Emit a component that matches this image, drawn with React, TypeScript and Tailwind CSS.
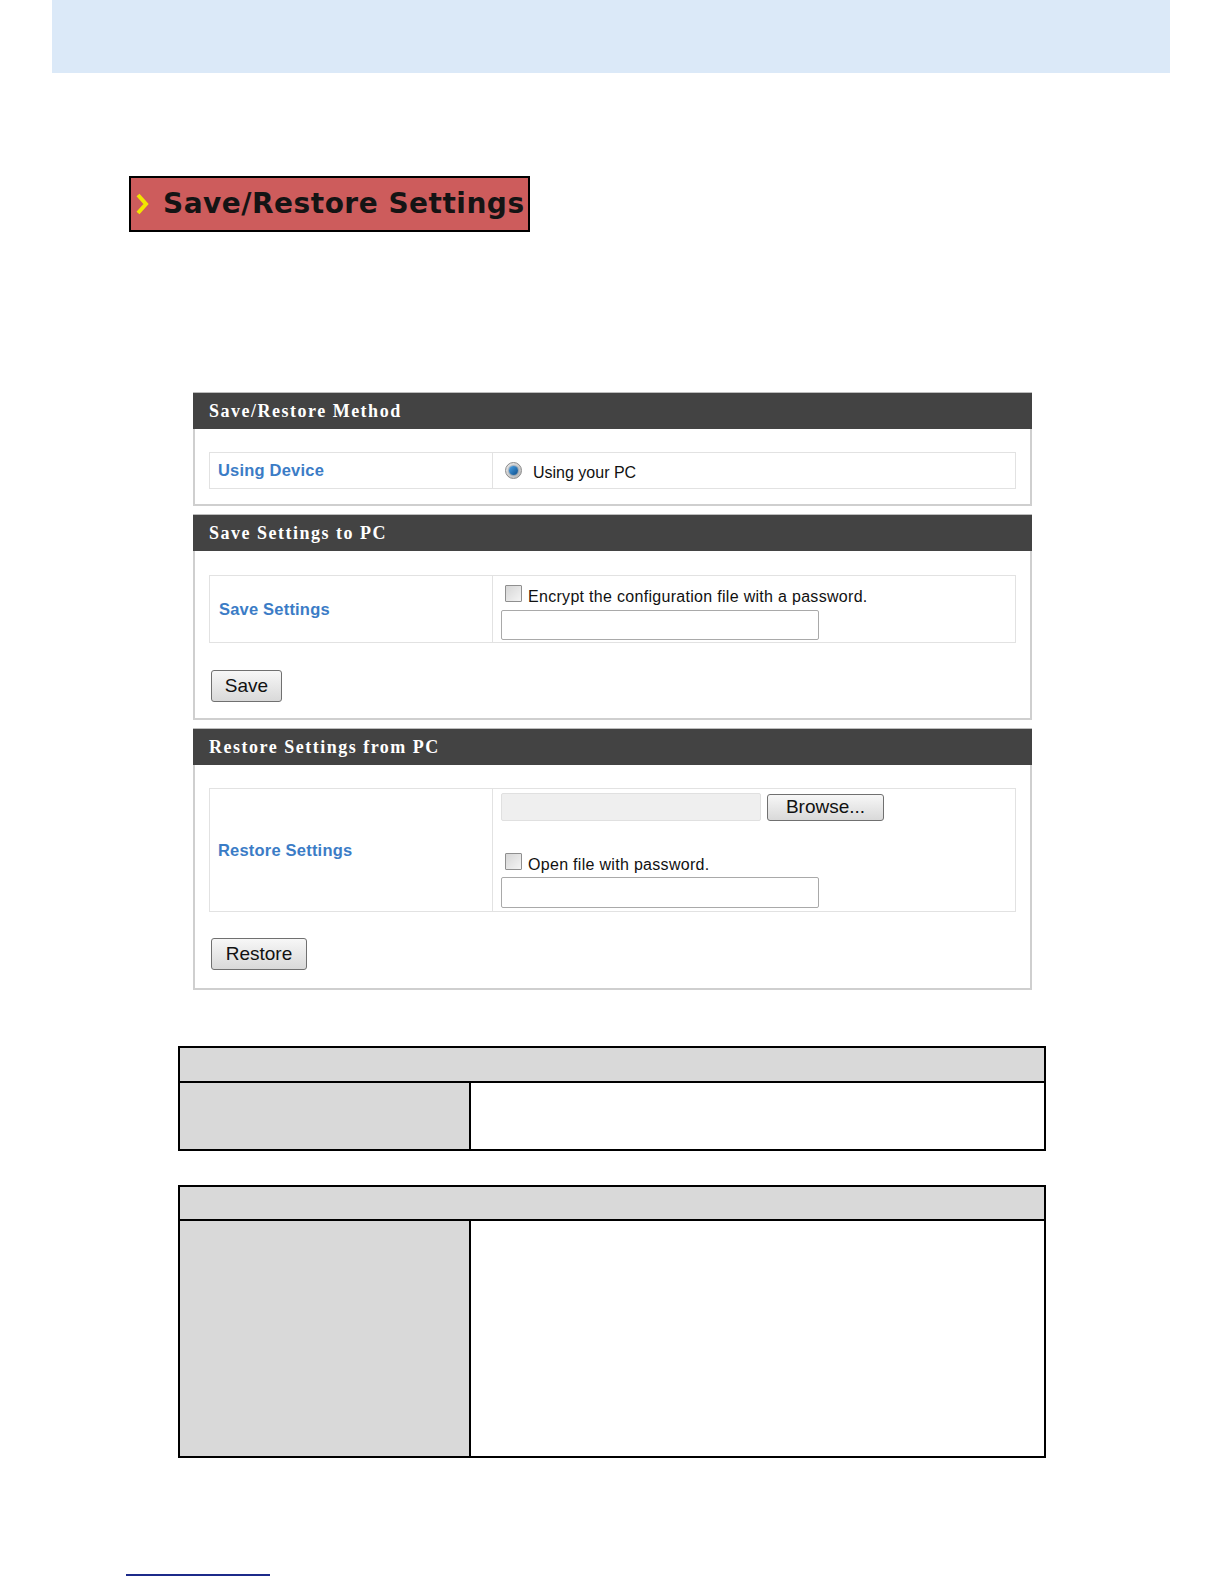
import React from "react";

const Header = ({ title }: { title: string }) => (
  <div className="h-[37px] bg-[#434343] border-t border-[#bdbdbd] flex items-center pl-[16px]">
    <span className="text-white font-bold text-[18px] tracking-[1.5px]" style={{ fontFamily: '"Liberation Serif", "DejaVu Serif", serif' }}>
      {title}
    </span>
  </div>
);

const Checkbox = () => (
  <span className="inline-block w-[17px] h-[17px] border border-[#8f8f8f] bg-gradient-to-br from-[#d6d6d6] to-[#f4f4f4] rounded-[1px] shrink-0" />
);

const Btn = ({ label, w }: { label: string; w: string }) => (
  <button
    className={`${w} h-[32px] ml-[2px] border border-[#707070] rounded-[3px] bg-gradient-to-b from-[#f7f7f7] to-[#d9d9d9] text-[19px] text-[#111] flex items-center justify-center`}
    style={{ fontFamily: '"Liberation Sans", Arial, sans-serif' }}
  >
    {label}
  </button>
);

const labelCls = "text-[#3b7cc6] font-bold text-[16.5px] tracking-[0.2px]";
const labelFont = { fontFamily: '"Liberation Sans", Arial, sans-serif' };
const bodyFont = { fontFamily: '"Liberation Sans", Arial, sans-serif' };

export default function App() {
  return (
    <div className="w-[1224px] h-[1584px] bg-white relative overflow-hidden">
      <div className="ml-[52px] w-[1118px] h-[73px] bg-[#dbe9f8]" />

      <div className="mt-[103px] ml-[129px] w-[401px] h-[56px] border-2 border-black bg-[#cd5c5c] flex items-center">
        <svg width="14" height="22" viewBox="0 0 14 22" className="ml-[4px] mr-[14px]">
          <path d="M3 2 L11 11 L3 20" fill="none" stroke="#f2e600" strokeWidth="4" strokeLinejoin="miter" />
        </svg>
        <span className="font-bold text-[28px] text-[#141414] tracking-[0.5px]" style={{ fontFamily: '"DejaVu Sans", Verdana, sans-serif' }}>
          Save/Restore Settings
        </span>
      </div>

      <div className="mt-[160px] ml-[193px] w-[839px] flex flex-col gap-[8px]">
        {/* Panel 1 */}
        <div>
          <Header title="Save/Restore Method" />
          <div className="border-x-2 border-b-2 border-[#cfcfcf] px-[14px] pt-[23px] pb-[15px]">
            <div className="flex h-[37px] border border-[#e2e2e2]">
              <div className="w-[283px] border-r border-[#e2e2e2] flex items-center pl-[8px]">
                <span className={labelCls} style={labelFont}>Using Device</span>
              </div>
              <div className="flex-1 flex items-center pl-[12px] gap-[11px]">
                <span className="w-[17px] h-[17px] rounded-full border border-[#8a8a8a] bg-gradient-to-br from-[#ececec] to-[#b8b8b8] flex items-center justify-center">
                  <span className="w-[9px] h-[9px] rounded-full bg-gradient-to-br from-[#4aa3e8] to-[#0d4f8c] shadow-[0_0_2px_#0a3e6e]" />
                </span>
                <span className="text-[16px] leading-none text-[#111] mt-[4px]" style={bodyFont}>Using your PC</span>
              </div>
            </div>
          </div>
        </div>

        {/* Panel 2 */}
        <div>
          <Header title="Save Settings to PC" />
          <div className="border-x-2 border-b-2 border-[#cfcfcf] px-[14px] pt-[24px] pb-[16px]">
            <div className="flex h-[68px] border border-[#e2e2e2]">
              <div className="w-[283px] border-r border-[#e2e2e2] flex items-center pl-[9px]">
                <span className={labelCls} style={labelFont}>Save Settings</span>
              </div>
              <div className="flex-1 flex flex-col pl-[8px] pt-[9px]">
                <div className="flex items-center gap-[6px] pl-[4px] h-[17px] shrink-0">
                  <Checkbox />
                  <span className="text-[16px] leading-none tracking-[0.3px] text-[#111] mt-[6px]" style={bodyFont}>Encrypt the configuration file with a password.</span>
                </div>
                <div className="mt-[8px] shrink-0 w-[318px] h-[30px] border border-[#a9a9a9] rounded-[2px] bg-white" />
              </div>
            </div>
            <div className="mt-[27px]">
              <Btn label="Save" w="w-[71px]" />
            </div>
          </div>
        </div>

        {/* Panel 3 */}
        <div>
          <Header title="Restore Settings from PC" />
          <div className="border-x-2 border-b-2 border-[#cfcfcf] px-[14px] pt-[23px] pb-[18px]">
            <div className="flex h-[124px] border border-[#e2e2e2]">
              <div className="w-[283px] border-r border-[#e2e2e2] flex items-center pl-[8px]">
                <span className={labelCls} style={labelFont}>Restore Settings</span>
              </div>
              <div className="flex-1 flex flex-col pl-[8px] pt-[4px]">
                <div className="flex items-center gap-[6px] shrink-0">
                  <div className="w-[260px] h-[28px] bg-[#efefef] border border-[#e0e0e0] rounded-[2px]" />
                  <button
                    className="w-[117px] h-[27px] border border-[#707070] rounded-[3px] bg-gradient-to-b from-[#f7f7f7] to-[#d9d9d9] text-[19px] text-[#111] flex items-center justify-center"
                    style={bodyFont}
                  >
                    Browse...
                  </button>
                </div>
                <div className="flex items-center gap-[6px] pl-[4px] mt-[32px] h-[17px] shrink-0">
                  <Checkbox />
                  <span className="text-[16px] leading-none tracking-[0.3px] text-[#111] mt-[6px]" style={bodyFont}>Open file with password.</span>
                </div>
                <div className="mt-[7px] shrink-0 w-[318px] h-[31px] border border-[#a9a9a9] rounded-[2px] bg-white" />
              </div>
            </div>
            <div className="mt-[26px]">
              <Btn label="Restore" w="w-[96px]" />
            </div>
          </div>
        </div>
      </div>

      {/* Table A */}
      <div className="mt-[56px] ml-[178px] w-[868px] border-2 border-black">
        <div className="h-[35px] bg-[#d9d9d9] border-b-2 border-black" />
        <div className="flex h-[66px]">
          <div className="w-[291px] bg-[#d9d9d9] border-r-2 border-black" />
          <div className="flex-1 bg-white" />
        </div>
      </div>

      {/* Table B */}
      <div className="mt-[34px] ml-[178px] w-[868px] border-2 border-black">
        <div className="h-[34px] bg-[#d9d9d9] border-b-2 border-black" />
        <div className="flex h-[235px]">
          <div className="w-[291px] bg-[#d9d9d9] border-r-2 border-black" />
          <div className="flex-1 bg-white" />
        </div>
      </div>

      <div className="mt-[116px] ml-[126px] w-[144px] h-[2px] bg-[#1c2a8a]" />
    </div>
  );
}
